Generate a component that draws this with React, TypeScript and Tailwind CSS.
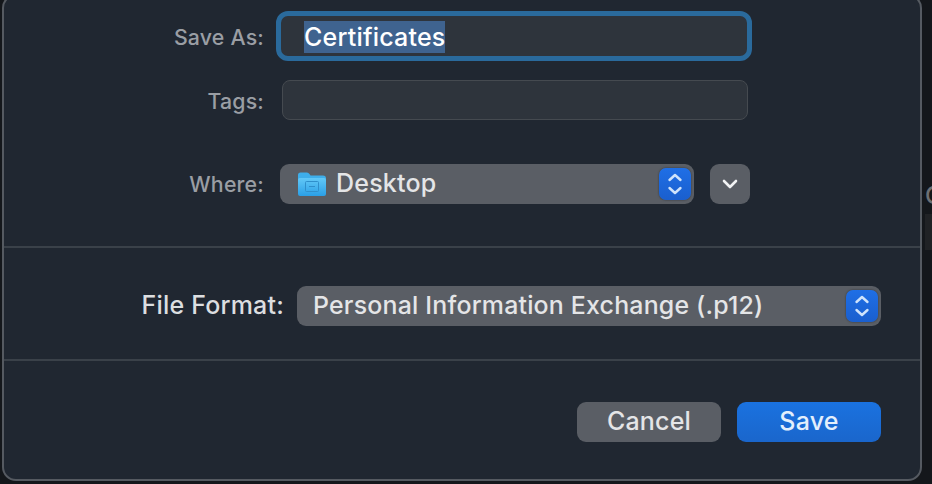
function Stepper() {
  return (
    <div className="flex h-[32px] w-[32px] items-center justify-center rounded-[7px] bg-gradient-to-b from-[#1f6fe6] to-[#1a5fce] shadow-[0_0_2px_rgba(0,0,0,0.5)]">
      <svg width="16" height="24" viewBox="0 0 16 24" fill="none" stroke="#cfe3fb" strokeWidth="2.4" strokeLinecap="round" strokeLinejoin="round">
        <path d="M2.5 8 L8 3 L13.5 8" />
        <path d="M2.5 16 L8 21 L13.5 16" />
      </svg>
    </div>
  );
}

function FolderIcon() {
  return (
    <svg width="30" height="26" viewBox="0 0 30 26">
      <defs>
        <linearGradient id="folderFront" x1="0" y1="0" x2="0" y2="1">
          <stop offset="0" stopColor="#62c8f7" />
          <stop offset="1" stopColor="#2a9fe6" />
        </linearGradient>
      </defs>
      <path d="M1 4 Q1 1.5 3.5 1.5 H10 Q11.5 1.5 12.5 3 L13.5 4.5 H26 Q29 4.5 29 7.5 V10 H1 Z" fill="#3eaeea" />
      <rect x="1" y="7" width="28" height="18" rx="2" fill="url(#folderFront)" />
      <rect x="8.5" y="10.5" width="13" height="10" rx="1" fill="none" stroke="#2f8fcb" strokeWidth="1" />
      <path d="M12 15.5 H18" stroke="#2f8fcb" strokeWidth="1" />
    </svg>
  );
}

export default function App() {
  return (
    <div className="relative h-[484px] w-[932px] overflow-hidden bg-[#14171b] font-['Inter','Liberation_Sans',sans-serif] font-[450] tracking-[0.2px]">
      {/* window behind the sheet, only a sliver shows */}
      <div className="absolute left-[925px] top-[178px] text-[24px] text-[#6d7074]">C</div>
      <div className="absolute left-[925px] top-[214px] h-[36px] w-[7px] bg-[#202225]" />

      <div className="relative ml-[2px] -mt-[6px] flex h-[487px] w-[920px] flex-col rounded-[14px] border-2 border-[#555a61] bg-[#202731]">
        {/* Save As */}
        <div className="mt-[15px] flex h-[50px] items-center">
          <label className="mt-[3px] w-[260px] text-right text-[21.3px] text-[#9a9ea4]">Save As:</label>
          <div className="ml-[12px] flex h-[50px] w-[476px] items-center rounded-[12px] border-[5px] border-[#2a6a9c] bg-[#2e343c] pl-[23px]">
            <span className="mt-[2px] bg-[#3f638f] text-[25px] leading-[32px] text-white">Certificates</span>
          </div>
        </div>

        {/* Tags */}
        <div className="mt-[19px] flex h-[40px] items-center">
          <label className="mt-[3px] w-[260px] text-right text-[21.3px] text-[#9a9ea4]">Tags:</label>
          <div className="ml-[18px] h-[40px] w-[466px] rounded-[8px] border border-[#454a50] bg-[#2e343c]" />
        </div>

        {/* Where */}
        <div className="mt-[44px] flex h-[40px] items-center">
          <label className="mt-[1px] w-[260px] text-right text-[21.3px] text-[#9a9ea4]">Where:</label>
          <div className="ml-[16px] flex h-[40px] w-[414px] items-center rounded-[9px] bg-[#5a5e65] pl-[17px] pr-[3px]">
            <FolderIcon />
            <span className="ml-[9px] flex-1 text-[25px] text-[#e4e5e7]">Desktop</span>
            <Stepper />
          </div>
          <button className="ml-[16px] flex h-[40px] w-[40px] items-center justify-center rounded-[9px] bg-[#5a5e65]">
            <svg width="16" height="10" viewBox="0 0 16 10" fill="none" stroke="#f2f3f4" strokeWidth="2.6" strokeLinecap="round" strokeLinejoin="round">
              <path d="M2 2 L8 8 L14 2" />
            </svg>
          </button>
        </div>

        <div className="mt-[42px] h-[2px] bg-[#3a4149]" />

        {/* File Format */}
        <div className="mt-[38px] flex h-[40px] items-center">
          <label className="w-[280px] text-right text-[25px] text-[#dcdee0]">File Format:</label>
          <div className="ml-[13px] flex h-[40px] w-[584px] items-center rounded-[9px] bg-[#5a5e65] pl-[16px] pr-[3px]">
            <span className="flex-1 text-[24.9px] text-[#e4e5e7]">Personal Information Exchange (.p12)</span>
            <Stepper />
          </div>
        </div>

        <div className="mt-[33px] h-[2px] bg-[#3a4149]" />

        {/* Buttons */}
        <div className="mt-[41px] flex justify-end gap-[16px] pr-[39px]">
          <button className="h-[40px] w-[144px] rounded-[9px] bg-[#5a5e65] text-[25px] text-[#e4e5e7]">Cancel</button>
          <button className="h-[40px] w-[144px] rounded-[9px] bg-gradient-to-b from-[#1a72e0] to-[#1a66cc] text-[25px] text-[#e3effc]">Save</button>
        </div>
      </div>
    </div>
  );
}
